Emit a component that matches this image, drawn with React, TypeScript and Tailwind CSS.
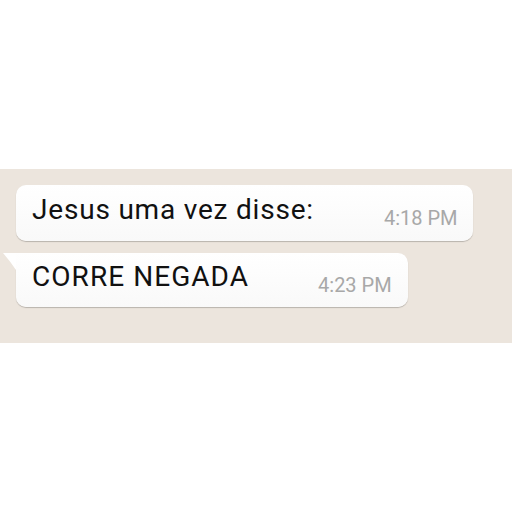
import React from "react";

export default function App() {
  return (
    <div className="w-[512px] h-[512px] bg-white flex flex-col" style={{ fontFamily: "Roboto, 'Liberation Sans', sans-serif" }}>
      <div className="h-[169px]" />
      <div className="h-[174px] bg-[#ece5dd] flex flex-col items-start pt-[16px] pl-[16px] gap-[12px]">
        <div className="flex items-start bg-gradient-to-b from-white to-[#f9f9f9] rounded-[10px] shadow-[0_1px_1px_rgba(0,0,0,0.22)] pl-[16px] pr-[15px] pt-[10px] pb-[12px]">
          <span className="text-[28px] leading-[30px] tracking-[0.8px] text-[#111]">Jesus uma vez disse:</span>
          <span className="ml-[70px] mt-[12px] text-[20px] leading-[22px] text-[#a8a8a8]">4:18 PM</span>
        </div>
        <div className="relative flex items-start bg-gradient-to-b from-white to-[#f9f9f9] rounded-[10px] rounded-tl-none shadow-[0_1px_1px_rgba(0,0,0,0.22)] pl-[16px] pr-[16px] pt-[9px] pb-[11px]">
          <svg className="absolute left-[-13px] top-0" width="13" height="17" viewBox="0 0 13 17">
            <path d="M0 0 L13 0 L13 17 Q7 8 0 0 Z" fill="#ffffff" />
          </svg>
          <span className="text-[28px] leading-[30px] tracking-[1.05px] text-[#111]">CORRE NEGADA</span>
          <span className="ml-[69px] mt-[12px] text-[20px] leading-[22px] text-[#a8a8a8]">4:23 PM</span>
        </div>
      </div>
      <div className="flex-1" />
    </div>
  );
}
